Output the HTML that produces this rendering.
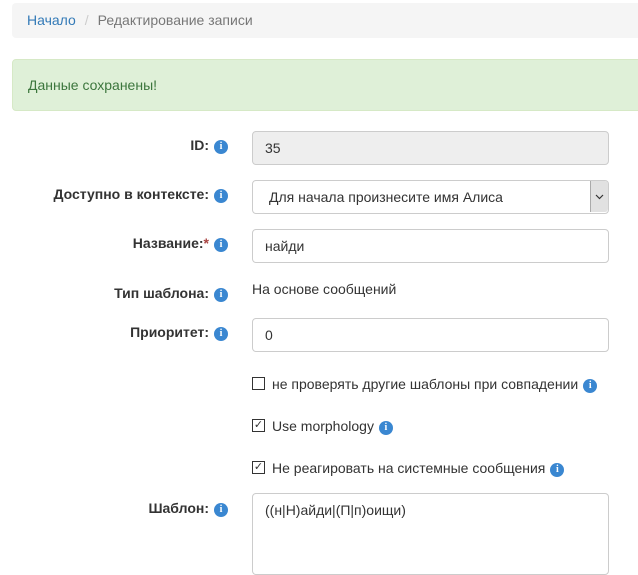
<!DOCTYPE html>
<html><head><meta charset="utf-8"><style>
body{margin:0;width:638px;height:552px;overflow:hidden;background:#fff;font-family:"Liberation Sans",Arial,sans-serif;font-size:14px;color:#333;position:relative}
.a{position:absolute}
.bc{left:12px;top:3px;width:640px;height:35px;background:#f5f5f5;border-radius:4px}
.al{left:12px;top:59px;width:640px;height:50px;background:#dff0d8;border:1px solid #d6e9c6;border-radius:4px}
.lbl{right:410px;font-weight:bold;text-align:right;white-space:nowrap;line-height:16px}
.i{display:inline-block;width:14px;height:14px;border-radius:50%;background:#3a87d1;color:#fff;font-size:10px;font-weight:bold;line-height:14px;text-align:center;vertical-align:1px;margin-left:5px;font-family:"Liberation Serif",serif}
.inp{left:252px;height:32px;border:1px solid #ccc;border-radius:4px;line-height:32px;padding-left:12px;box-sizing:content-box;width:343px}
.cb{left:252px;width:11px;height:11px;border:1px solid #333;font-size:11px;line-height:11px;text-align:center}
.ct{left:272px;white-space:nowrap;line-height:16px}
</style></head><body>
<div class="a bc"></div>
<div class="a" style="left:27px;top:12px;line-height:16px"><span style="color:#337ab7">Начало</span><span style="color:#ccc;padding:0 9px">/</span><span style="color:#777">Редактирование записи</span></div>
<div class="a al"></div>
<div class="a" style="left:28px;top:77px;color:#3c763d;line-height:16px">Данные сохранены!</div>

<div class="a lbl" style="top:137px">ID:<span class="i">i</span></div>
<div class="a inp" style="top:131px;background:#eee">35</div>

<div class="a lbl" style="top:186px">Доступно в контексте:<span class="i">i</span></div>
<div class="a inp" style="top:180px;padding-left:16px;width:339px">Для начала произнесите имя Алиса</div>
<div class="a" style="left:590px;top:181px;width:17px;height:31px;background:#e1e1e1;border-left:1px solid #aaa;border-radius:0 3px 3px 0"><svg width="17" height="31"><path d="M5 14l3.5 3.5L12 14" fill="none" stroke="#333" stroke-width="1.2"/></svg></div>

<div class="a lbl" style="top:235px">Название:<span style="color:#a94442">*</span><span class="i">i</span></div>
<div class="a inp" style="top:229px">найди</div>

<div class="a lbl" style="top:285px">Тип шаблона:<span class="i">i</span></div>
<div class="a" style="left:252px;top:281px;line-height:16px">На основе сообщений</div>

<div class="a lbl" style="top:324px">Приоритет:<span class="i">i</span></div>
<div class="a inp" style="top:318px">0</div>

<div class="a cb" style="top:377px"></div>
<div class="a ct" style="top:376px">не проверять другие шаблоны при совпадении<span class="i">i</span></div>
<div class="a cb" style="top:419px">✓</div>
<div class="a ct" style="top:418px">Use morphology<span class="i">i</span></div>
<div class="a cb" style="top:461px">✓</div>
<div class="a ct" style="top:460px">Не реагировать на системные сообщения<span class="i">i</span></div>

<div class="a lbl" style="top:500px">Шаблон:<span class="i">i</span></div>
<div class="a" style="left:252px;top:493px;width:355px;height:80px;border:1px solid #ccc;border-radius:4px"></div>
<div class="a" style="left:265px;top:502px;line-height:16px">((н|Н)айди|(П|п)оищи)</div>
</body></html>
